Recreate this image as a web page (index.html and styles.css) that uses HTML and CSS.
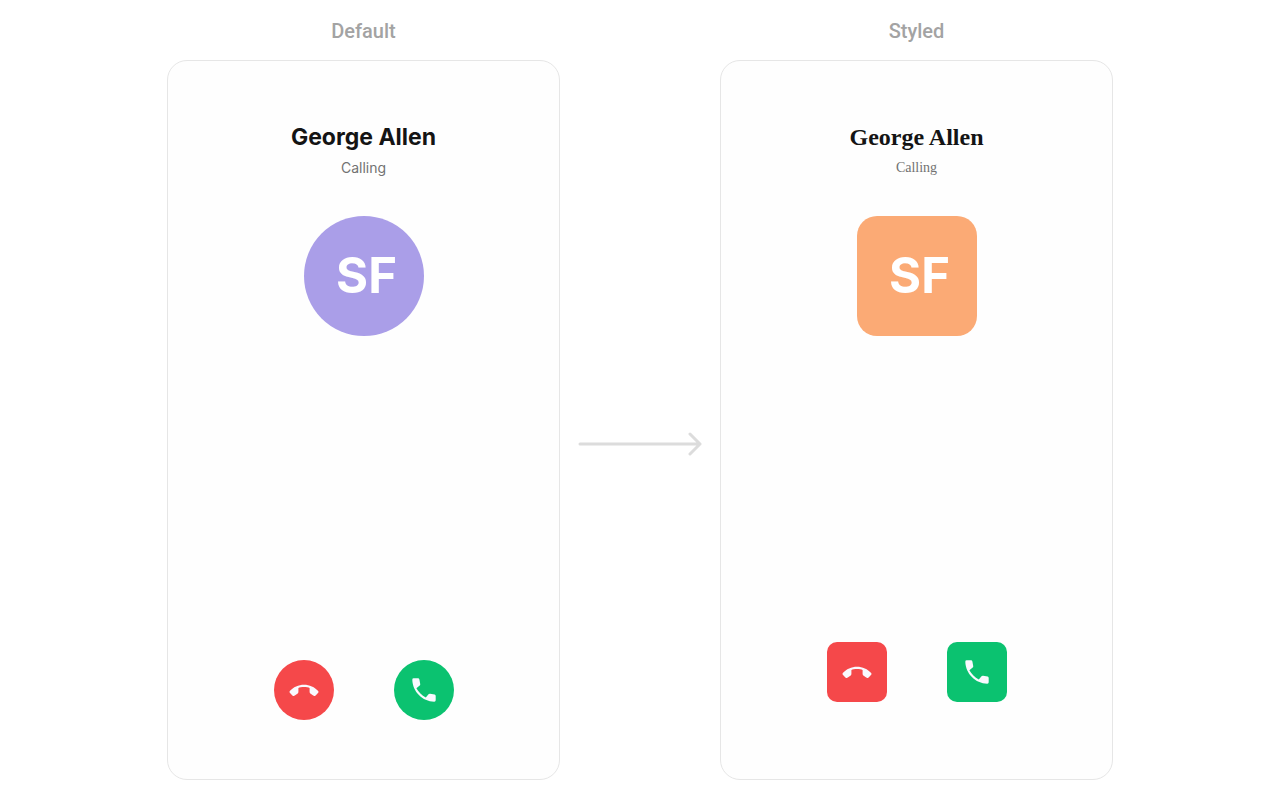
FILE: index.html
```html
<!DOCTYPE html>
<html lang="en">
<head>
<meta charset="utf-8">
<meta name="viewport" content="width=device-width, initial-scale=1">
<title>Outgoing call</title>
<link rel="stylesheet" href="styles.css">
</head>
<body>
<svg class="symbols" aria-hidden="true">
  <symbol id="decline" viewBox="-16 -16 32 32">
    <path d="M0-5.2C-5.4-5.2-10.8-2.8-14.2 1.1Q-14.9 2-14.2 2.8L-11.6 5.4Q-10.4 6.5-9.2 5.6L-6.3 3.4Q-5.6 2.9-5.6 2.1V-2C-3.6-3.4 3.6-3.4 5.6-2V2.1Q5.6 2.9 6.3 3.4L9.2 5.6Q10.4 6.5 11.6 5.4L14.2 2.8Q14.9 2 14.2 1.1C10.8-2.8 5.4-5.2 0-5.2Z"/>
  </symbol>
  <symbol id="accept" viewBox="-16 -16 32 32">
    <path d="M-10.3-11.7H-6Q-4.8-11.7-4.6-10.6L-3.8-6.1Q-3.6-5.1-4.3-4.5L-7.6-1.8C-5.4 2.2-2.2 5.4 1.8 7.6L4.5 4.3Q5.1 3.6 6.1 3.8L10.6 4.6Q11.7 4.8 11.7 6V10.3Q11.7 11.7 10.3 11.7C-1.7 11.3-11.3 1.7-11.7-10.3Q-11.7-11.7-10.3-11.7Z"/>
  </symbol>
</svg>
<main class="comparison">
  <section class="variant">
    <h2 class="variant-label">Default</h2>
    <div class="screen">
      <h1 class="caller">George Allen</h1>
      <p class="status">Calling</p>
      <div class="avatar">SF</div>
      <div class="actions">
        <button class="action decline" type="button" aria-label="Decline"><svg class="icon" aria-hidden="true"><use href="#decline"/></svg></button>
        <button class="action accept" type="button" aria-label="Accept"><svg class="icon" aria-hidden="true"><use href="#accept"/></svg></button>
      </div>
    </div>
  </section>
  <svg class="arrow" viewBox="0 0 124 24" aria-hidden="true"><path d="M2 12H122M112 2L122 12L112 22"/></svg>
  <section class="variant styled">
    <h2 class="variant-label">Styled</h2>
    <div class="screen">
      <h1 class="caller">George Allen</h1>
      <p class="status">Calling</p>
      <div class="avatar">SF</div>
      <div class="actions">
        <button class="action decline" type="button" aria-label="Decline"><svg class="icon" aria-hidden="true"><use href="#decline"/></svg></button>
        <button class="action accept" type="button" aria-label="Accept"><svg class="icon" aria-hidden="true"><use href="#accept"/></svg></button>
      </div>
    </div>
  </section>
</main>
</body>
</html>
```
FILE: styles.css
```css
* {
  box-sizing: border-box;
}

body {
  margin: 0;
  background: #fff;
  color: #141414;
  font-family: Inter, sans-serif;
}

h1,
h2,
p {
  margin: 0;
}

.symbols {
  position: absolute;
  width: 0;
  height: 0;
}

.comparison {
  display: flex;
  justify-content: center;
  align-items: center;
  gap: 18px;
  min-height: 100vh;
  padding: 20px;
}

.variant {
  display: flex;
  flex-direction: column;
  align-self: stretch;
  flex: 0 1 393px;
  gap: 18px;
}

.variant-label {
  color: #a3a3a3;
  font: 500 20px/22px Roboto, sans-serif;
  text-align: center;
}

.screen {
  display: flex;
  flex: 1;
  flex-direction: column;
  align-items: center;
  border: 1px solid #e6e6e6;
  border-radius: 20px;
  padding: 60px 20px 59px;
  background: #fefefe;
}

.caller {
  font-size: 23px;
  font-weight: 700;
  line-height: 32px;
}

.status {
  margin-top: 4px;
  color: #727272;
  font-size: 14px;
  line-height: 22px;
}

.avatar {
  display: grid;
  place-items: center;
  width: 120px;
  height: 120px;
  margin-top: 37px;
  padding: 0 0 2px 6px;
  border-radius: 50%;
  background: #aa9ee8;
  color: #fff;
  font-size: 49px;
  font-weight: 700;
}

.actions {
  display: flex;
  gap: 60px;
  margin-top: auto;
}

.action {
  display: grid;
  place-items: center;
  width: 60px;
  height: 60px;
  padding: 0;
  border: 0;
  border-radius: 50%;
  cursor: pointer;
}

.decline {
  background: #f5484a;
}

.accept {
  background: #0bc270;
}

.icon {
  width: 32px;
  height: 32px;
  fill: #f9f9fe;
}

.arrow {
  flex: 0 0 124px;
  height: 24px;
  margin-top: 88px;
  fill: none;
  stroke: #dcdcdc;
  stroke-width: 3;
  stroke-linecap: round;
  stroke-linejoin: round;
}

.styled .screen {
  padding-bottom: 77px;
}

.styled .caller,
.styled .status {
  font-family: "Liberation Serif", serif;
}

.styled .caller {
  font-size: 24px;
}

.styled .avatar {
  border-radius: 20px;
  background: #fbaa75;
}

.styled .action {
  border-radius: 10px;
}
```
